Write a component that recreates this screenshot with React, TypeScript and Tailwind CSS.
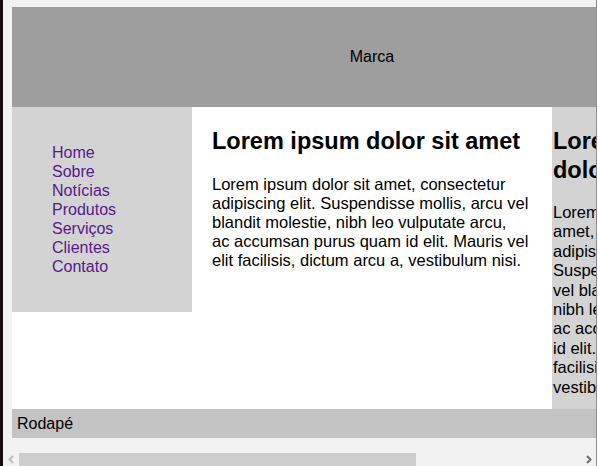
import React from "react";

const font = { fontFamily: '"Liberation Sans", Arial, sans-serif' };

const mainLines = [
  "Lorem ipsum dolor sit amet, consectetur",
  "adipiscing elit. Suspendisse mollis, arcu vel",
  "blandit molestie, nibh leo vulputate arcu,",
  "ac accumsan purus quam id elit. Mauris vel",
  "elit facilisis, dictum arcu a, vestibulum nisi.",
];

const asideLines = [
  "Lorem ipsum dolor sit",
  "amet, consectetur",
  "adipiscing elit.",
  "Suspendisse mollis, arcu",
  "vel blandit molestie,",
  "nibh leo vulputate arcu,",
  "ac accumsan purus quam",
  "id elit. Mauris vel elit",
  "facilisis, dictum arcu a,",
  "vestibulum nisi.",
];

const nav = ["Home", "Sobre", "Notícias", "Produtos", "Serviços", "Clientes", "Contato"];

export default function App() {
  return (
    <div
      className="relative flex w-[598px] h-[466px] overflow-hidden bg-[#f2f2f2] text-black"
      style={font}
    >
      <div className="w-[3px] shrink-0 bg-[#120a0c]" />
      <div className="w-[593px] shrink-0 overflow-hidden">
        <div className="w-[740px] pl-[9px] pt-[7px]">
          <header className="flex h-[100px] w-[720px] items-center justify-center bg-[#9e9e9e] text-[16px]">
            Marca
          </header>
          <div className="flex w-[720px] items-start bg-white">
            <nav className="w-[180px] shrink-0 bg-[#d3d3d3] py-[20px]">
              <ul className="my-[16px] pl-[40px]">
                {nav.map((n) => (
                  <li key={n} className="text-[16px] leading-[19px]">
                    <a href="#" className="text-[#551a8b]">
                      {n}
                    </a>
                  </li>
                ))}
              </ul>
            </nav>
            <main className="w-[360px] shrink-0 px-[20px] pt-[20px]">
              <h1 className="mb-[20px] whitespace-nowrap text-[23.5px] font-bold leading-[28px]">
                Lorem ipsum dolor sit amet
              </h1>
              <p className="text-[16.5px] leading-[19px]">
                {mainLines.map((l) => (
                  <span key={l} className="block whitespace-nowrap">
                    {l}
                  </span>
                ))}
              </p>
            </main>
            <aside className="h-[302px] w-[180px] shrink-0 bg-[#d3d3d3] pl-[1px] pt-[20px]">
              <h2 className="mb-[18px] text-[23.5px] font-bold leading-[29px]">
                <span className="block whitespace-nowrap">Lorem ipsum</span>
                <span className="block whitespace-nowrap">dolor sit amet</span>
              </h2>
              <p className="text-[16.5px] leading-[19.4px]">
                {asideLines.map((l) => (
                  <span key={l} className="block whitespace-nowrap">
                    {l}
                  </span>
                ))}
              </p>
            </aside>
          </div>
          <footer className="flex h-[29px] w-[720px] items-center bg-[#c3c3c3] pl-[5px] text-[16px]">
            Rodapé
          </footer>
        </div>
      </div>
      <div className="w-px shrink-0 bg-[#8c8c8c]" />
      <div className="w-px shrink-0 bg-white" />

      <div className="absolute bottom-0 left-[3px] flex h-[13px] w-[593px] items-center bg-[#f2f2f2]">
        <div className="flex w-[16px] items-center justify-center">
          <svg width="6" height="9" viewBox="0 0 6 9">
            <path d="M5 1 L1.5 4.5 L5 8" stroke="#bdbdbd" strokeWidth="2" fill="none" />
          </svg>
        </div>
        <div className="h-[13px] w-[397px] bg-[#cdcdcd]" />
        <div className="flex-1" />
        <div className="flex w-[14px] items-center justify-center">
          <svg width="6" height="9" viewBox="0 0 6 9">
            <path d="M1 1 L4.5 4.5 L1 8" stroke="#6e6e6e" strokeWidth="2" fill="none" />
          </svg>
        </div>
      </div>
    </div>
  );
}
